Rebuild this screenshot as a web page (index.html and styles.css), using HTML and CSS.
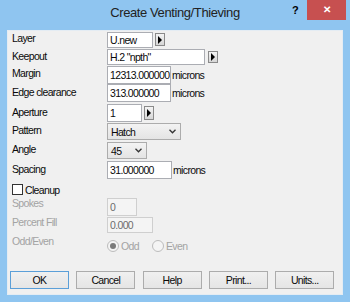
FILE: index.html
```html
<!DOCTYPE html>
<html lang="en">
<head>
    <meta charset="UTF-8">
    <title>Create Venting/Thieving</title>
    <link rel="stylesheet" href="styles.css">
</head>
<body>
    <div class="window">
        <!-- Caption bar -->
        <div class="titlebar">
            <span class="title">Create Venting/Thieving</span>
            <span class="help">?</span>
            <span class="close">&#x2715;</span>
        </div>

        <!-- Dialog body -->
        <div class="client">
            <div class="form">
                <div class="row r1">
                    <span class="label">Layer</span>
                    <span class="box short w-layer">U.new</span>
                    <span class="spin"></span>
                </div>
                <div class="row r2">
                    <span class="label">Keepout</span>
                    <span class="box short w-keepout">H.2 "npth"</span>
                    <span class="spin spin-keepout"></span>
                </div>
                <div class="row r3">
                    <span class="label">Margin</span>
                    <span class="box w-num">12313.000000</span>
                    <span class="unit">microns</span>
                </div>
                <div class="row r4">
                    <span class="label">Edge clearance</span>
                    <span class="box w-num">313.000000</span>
                    <span class="unit">microns</span>
                </div>
                <div class="row r5">
                    <span class="label">Aperture</span>
                    <span class="box w-aperture">1</span>
                    <span class="spin spin-tall"></span>
                </div>
                <div class="row r6">
                    <span class="label">Pattern</span>
                    <span class="combo w-pattern">Hatch
                        <svg width="7" height="5" viewBox="0 0 7 5"><path d="M0.5 0.8 L3.5 3.8 L6.5 0.8" fill="none" stroke="#333" stroke-width="1.3"/></svg>
                    </span>
                </div>
                <div class="row r7">
                    <span class="label">Angle</span>
                    <span class="combo w-angle">45
                        <svg width="7" height="5" viewBox="0 0 7 5"><path d="M0.5 0.8 L3.5 3.8 L6.5 0.8" fill="none" stroke="#333" stroke-width="1.3"/></svg>
                    </span>
                </div>
                <div class="row r8">
                    <span class="label">Spacing</span>
                    <span class="box w-spacing">31.000000</span>
                    <span class="unit">microns</span>
                </div>
                <div class="row r9">
                    <span class="check"></span>
                    <span class="check-text">Cleanup</span>
                </div>
                <div class="row r10">
                    <span class="label disabled lift-4">Spokes</span>
                    <span class="box off w-spokes">0</span>
                </div>
                <div class="row r11">
                    <span class="label disabled lift-2">Percent Fill</span>
                    <span class="box off short w-fill">0.000</span>
                </div>
                <div class="row r12">
                    <span class="label disabled lift-5">Odd/Even</span>
                    <span class="option"><span class="radio on"></span>Odd</span>
                    <span class="option"><span class="radio"></span>Even</span>
                </div>
            </div>

            <div class="buttons">
                <span class="btn default">OK</span>
                <span class="btn">Cancel</span>
                <span class="btn">Help</span>
                <span class="btn">Print...</span>
                <span class="btn">Units...</span>
            </div>
        </div>
    </div>
</body>
</html>
```

FILE: styles.css
```css
/* Global */
* {
    box-sizing: border-box;
}

body {
    margin: 0;
    font-family: "Liberation Sans", Arial, sans-serif;
    font-size: 10.5px;
    letter-spacing: -0.65px;
    color: #0a0a0a;
    background: #8fc5f0;
}

/* Window frame */
.window {
    width: 350px;
    height: 302px;
    background: #8fc5f0;
    display: flex;
    flex-direction: column;
}

.titlebar {
    height: 30px;
    display: flex;
    align-items: flex-start;
    padding-left: 65px;
    padding-right: 4px;
}

.title {
    flex: 1;
    text-align: center;
    font-size: 13px;
    letter-spacing: -0.4px;
    color: #222;
    line-height: 26px;
}

.help {
    width: 20px;
    margin-right: 2px;
    text-align: center;
    font-weight: bold;
    font-size: 11px;
    line-height: 21px;
    color: #000;
}

.close {
    width: 39px;
    height: 20px;
    background: #c75050;
    color: #fff;
    text-align: center;
    font-size: 10px;
    font-weight: bold;
    line-height: 20px;
}

.client {
    flex: 1;
    margin: 0 7px 7px 7px;
    background: #f0f0f0;
    border: 1px solid #e4ecf3;
    display: flex;
    flex-direction: column;
}

/* Form rows */
.form {
    padding-left: 4px;
    display: flex;
    flex-direction: column;
}

.row {
    display: flex;
    align-items: center;
}

.r1 { height: 17px; }
.r2 { height: 18px; }
.r3 { height: 17px; }
.r4 { height: 20px; }
.r5 { height: 20px; }
.r6 { height: 17px; }
.r7 { height: 21px; }
.r8 { height: 18px; }
.r9 { height: 17px; margin-top: 2px; }
.r10 { height: 18px; }
.r11 { height: 17px; }
.r12 { height: 18px; margin-top: 4px; }

.label {
    width: 95px;
    line-height: 12px;
    margin-bottom: 3px;
    white-space: nowrap;
}

.label.disabled {
    color: #a3a3a3;
}

.lift-4 { margin-bottom: 8px; }
.lift-2 { margin-bottom: 5px; }
.lift-5 { margin-bottom: 10px; }

/* Edit boxes */
.box {
    height: 18px;
    line-height: 16px;
    padding: 0 2px;
    background: #fff;
    border: 1px solid #abadb3;
    white-space: nowrap;
    overflow: hidden;
}

.box.short {
    height: 16px;
    line-height: 14px;
}

.box.off {
    background: #f4f4f4;
    border-color: #cfcfcf;
    color: #6d6d6d;
}

.w-layer { width: 46px; }
.w-keepout { width: 98px; }
.w-num { width: 64px; }
.w-aperture { width: 35px; }
.w-spacing { width: 65px; }
.w-spokes { width: 30px; }
.w-fill { width: 46px; }

.unit {
    margin-left: 1px;
}

/* Small arrow buttons */
.spin {
    width: 10px;
    height: 13px;
    margin-left: 2px;
    border: 1px solid #8a8a8a;
    background: linear-gradient(#f4f4f4, #d6d6d6);
    display: flex;
    align-items: center;
    justify-content: center;
}

.spin::after {
    content: "";
    border-left: 4px solid #000;
    border-top: 4px solid transparent;
    border-bottom: 4px solid transparent;
}

.spin-keepout {
    margin-left: 3px;
    height: 12px;
}

.spin-tall {
    height: 14px;
}

/* Drop-down lists */
.combo {
    height: 17px;
    padding: 0 4px 0 3px;
    border: 1px solid #acacac;
    background: linear-gradient(#f3f3f3, #e4e4e4);
    display: flex;
    align-items: center;
    justify-content: space-between;
}

.w-pattern { width: 74px; }
.w-angle { width: 40px; }

/* Checkbox and radios */
.check {
    width: 11px;
    height: 11px;
    background: #fff;
    border: 1px solid #333;
}

.check-text {
    margin-left: 2px;
}

.option {
    width: 45px;
    display: flex;
    align-items: center;
    color: #a3a3a3;
}

.radio {
    width: 12px;
    height: 12px;
    margin-right: 2px;
    border: 1px solid #bcbcbc;
    border-radius: 50%;
    background: #f4f4f4;
    display: flex;
    align-items: center;
    justify-content: center;
}

.radio.on::after {
    content: "";
    width: 6px;
    height: 6px;
    border-radius: 50%;
    background: #7a7a7a;
}

/* Bottom buttons */
.buttons {
    margin-top: 16px;
    padding-left: 2px;
    display: flex;
    gap: 7.3px;
}

.btn {
    width: 59px;
    height: 18px;
    line-height: 16px;
    text-align: center;
    border: 1px solid #acacac;
    background: linear-gradient(#f0f0f0, #e5e5e5);
}

.btn.default {
    border-color: #5b9fd8;
}
```
